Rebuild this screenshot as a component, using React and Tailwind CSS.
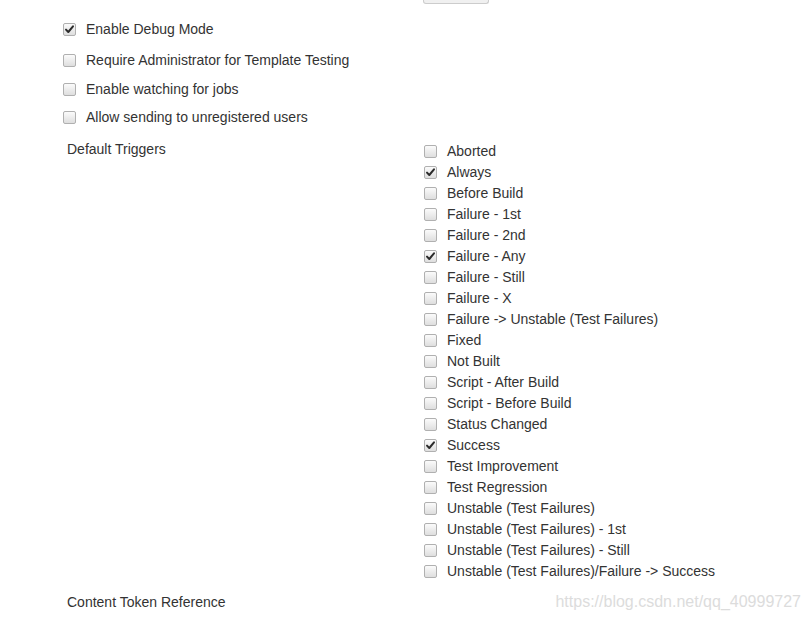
import React from "react";

function Box({ checked }) {
  return (
    <span className="relative inline-block w-[13px] h-[13px] shrink-0 rounded-[2px] border border-[#b0b0b0] bg-gradient-to-b from-[#fbfbfb] to-[#dedede]">
      {checked && (
        <svg viewBox="0 0 13 13" className="absolute -left-px -top-px w-[13px] h-[13px]">
          <path d="M3 6.6 L5.3 9 L10 3.3" fill="none" stroke="#2b2b2b" strokeWidth="2" strokeLinecap="round" strokeLinejoin="round" />
        </svg>
      )}
    </span>
  );
}

const triggers = [
  ["Aborted", false],
  ["Always", true],
  ["Before Build", false],
  ["Failure - 1st", false],
  ["Failure - 2nd", false],
  ["Failure - Any", true],
  ["Failure - Still", false],
  ["Failure - X", false],
  ["Failure -> Unstable (Test Failures)", false],
  ["Fixed", false],
  ["Not Built", false],
  ["Script - After Build", false],
  ["Script - Before Build", false],
  ["Status Changed", false],
  ["Success", true],
  ["Test Improvement", false],
  ["Test Regression", false],
  ["Unstable (Test Failures)", false],
  ["Unstable (Test Failures) - 1st", false],
  ["Unstable (Test Failures) - Still", false],
  ["Unstable (Test Failures)/Failure -> Success", false],
];

function TopRow({ checked, label, cls }) {
  return (
    <div className={"flex items-center h-5 pl-[63px] " + cls}>
      <Box checked={checked} />
      <span className="ml-[10px] leading-5">{label}</span>
    </div>
  );
}

export default function App() {
  return (
    <div className="relative w-[811px] h-[620px] overflow-hidden bg-white text-[#333333] text-[14px]" style={{ fontFamily: '"Liberation Sans", Arial, sans-serif' }}>
      <div className="ml-[423px] w-[66px] h-[4px] bg-[#f0f0f0] border border-t-0 border-[#cccccc] rounded-b-[3px]" />
      <TopRow checked label="Enable Debug Mode" cls="mt-[15px]" />
      <TopRow checked={false} label="Require Administrator for Template Testing" cls="mt-[11px]" />
      <TopRow checked={false} label="Enable watching for jobs" cls="mt-[9px]" />
      <TopRow checked={false} label="Allow sending to unregistered users" cls="mt-[8px]" />
      <div className="flex mt-[13px]">
        <div className="w-[424px] shrink-0 pl-[67px] leading-[18px]">Default Triggers</div>
        <div className="flex flex-col pt-[1px]">
          {triggers.map(([t, c]) => (
            <div key={t} className="flex items-center h-[21px]">
              <Box checked={c} />
              <span className="ml-[10px] leading-[21px]">{t}</span>
            </div>
          ))}
        </div>
      </div>
      <div className="pl-[67px] mt-[11px] leading-[18px]">Content Token Reference</div>
      <div className="absolute right-[10px] top-[591px] text-[16px] text-[#dcdcdc] leading-[22px]">https://blog.csdn.net/qq_40999727</div>
    </div>
  );
}
